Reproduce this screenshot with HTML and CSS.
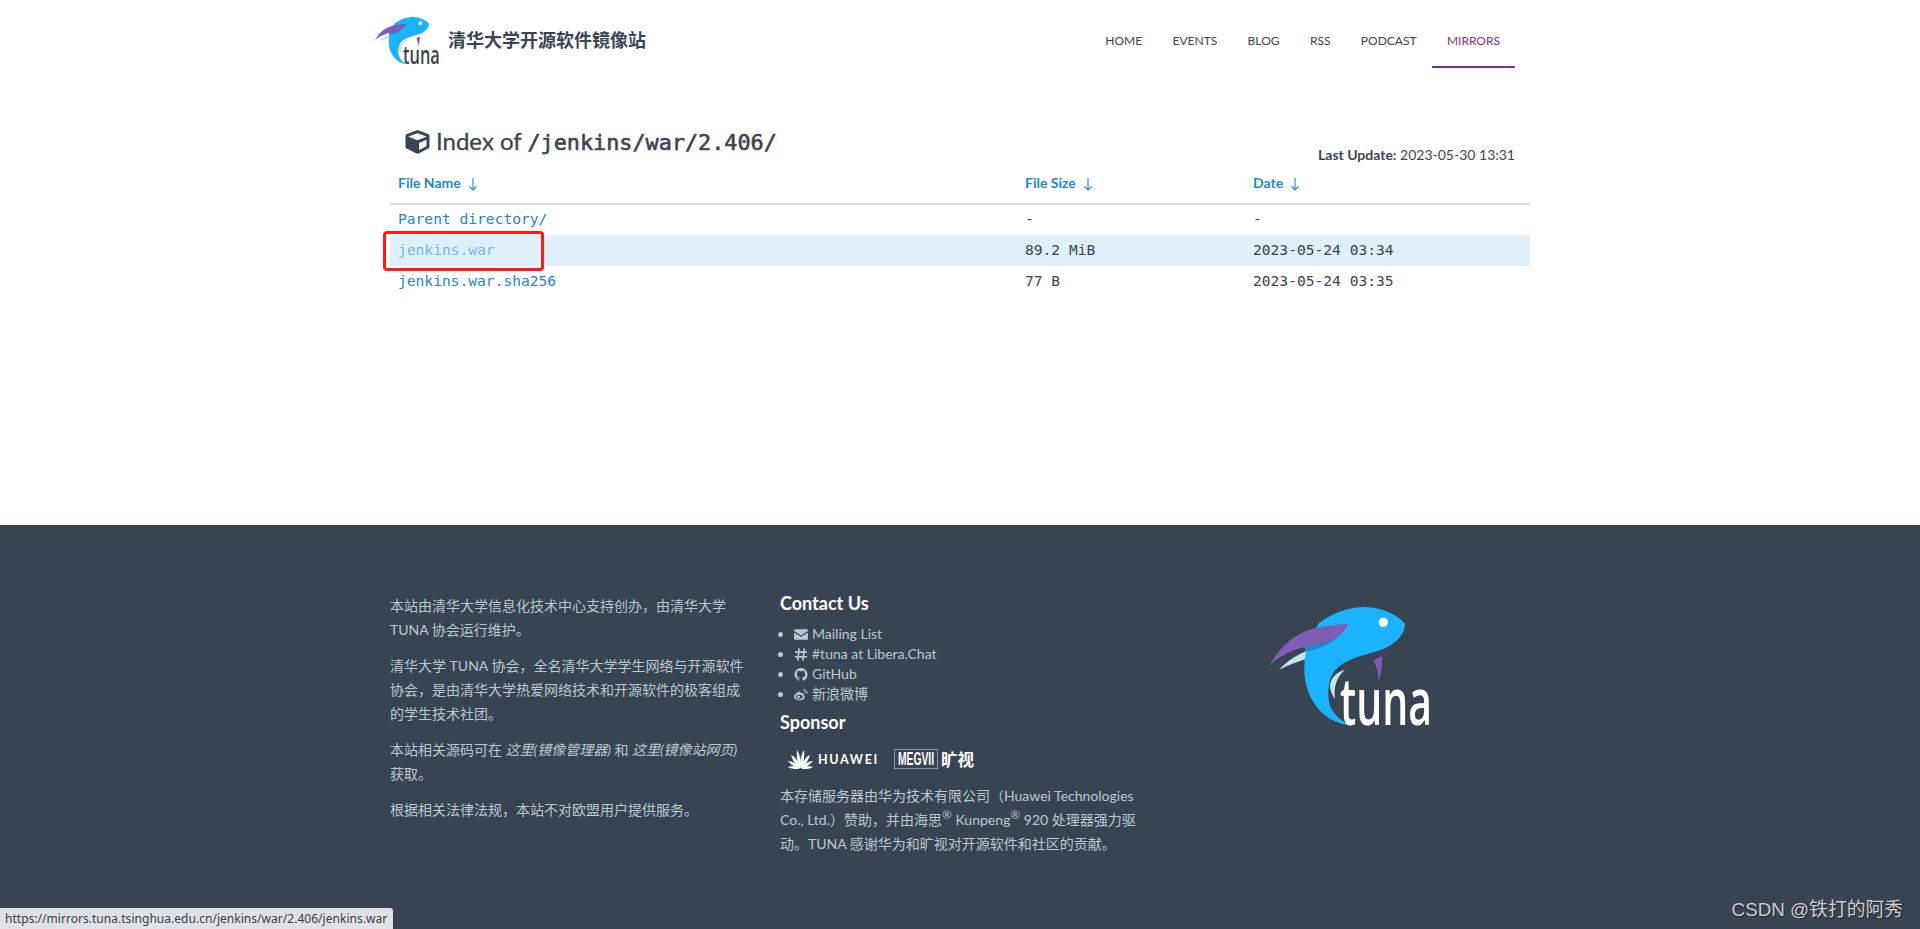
FILE: index.html
```html
<!DOCTYPE html>
<html lang="zh-CN">
<head>
<meta charset="utf-8">
<title>Index of /jenkins/war/2.406/</title>
<link rel="stylesheet" href="styles.css">
</head>
<body>
<svg class="defs" width="0" height="0" aria-hidden="true">
  <symbol id="tuna-logo" viewBox="60 50 480 360">
    <path fill="#1bb2ff" d="M205 100C250 65 300 50 345 50C400 52 445 75 465 100C465 130 440 160 395 178C340 195 285 205 255 240C235 265 230 310 240 345C250 375 280 398 305 405C260 402 215 378 190 335C165 295 160 250 164 205C165 190 165 180 166 170Z"/>
    <path fill="#2b83bf" d="M165 168C205 160 255 148 285 112C262 155 215 175 165 184Z"/>
    <path fill="#7f5db4" d="M60 225C85 175 130 130 190 115C225 106 260 102 295 100C285 130 250 152 210 160C165 168 110 178 60 225Z"/>
    <path fill="#c0e3ec" d="M88 238C110 212 140 195 168 183L165 207C140 215 115 225 88 238Z"/>
    <path fill="#7f5db4" d="M370 210L396 197C398 225 393 250 387 272C385 245 378 225 370 210Z"/>
    <path fill="#c0e3ec" d="M285 238C258 245 240 265 240 290C242 305 248 316 255 326C250 290 260 260 285 238Z"/>
    <circle cx="400" cy="96" r="14" fill="#fff"/>
    <text class="tuna-word" x="270" y="403" textLength="276" lengthAdjust="spacingAndGlyphs">tuna</text>
  </symbol>
</svg>

<header class="site-header">
  <div class="header-inner">
    <a class="brand" href="#">
      <svg class="brand-logo"><use href="#tuna-logo"/></svg>
      <span class="brand-name">清华大学开源软件镜像站</span>
    </a>
    <nav class="site-nav">
      <a href="#">HOME</a>
      <a href="#">EVENTS</a>
      <a href="#">BLOG</a>
      <a href="#">RSS</a>
      <a href="#">PODCAST</a>
      <a class="active" href="#">MIRRORS</a>
    </nav>
  </div>
</header>

<main class="content">
  <div class="title-row">
    <h1 class="page-title">
      <svg class="cube" viewBox="0 0 512 512"><path fill="currentColor" d="M239.1 6.3l-208 78c-18.7 7-31.1 25-31.1 45v225.1c0 18.2 10.3 34.8 26.5 42.9l208 104c13.5 6.8 29.4 6.8 42.9 0l208-104c16.3-8.1 26.5-24.8 26.5-42.9V129.3c0-20-12.4-37.9-31.1-44.9l-208-78C262 2.2 250 2.2 239.1 6.3zM256 68.4l192 72v1.1l-192 78-192-78v-1.1l192-72zm32 356V275.5l160-65v133.9l-160 80z"/></svg>
      <span>Index of <code>/jenkins/war/2.406/</code></span>
    </h1>
    <p class="last-update"><strong>Last Update:</strong> 2023-05-30 13:31</p>
  </div>
  <table class="files">
    <thead>
      <tr>
        <th class="col-name"><a href="#">File Name<svg class="arrow" viewBox="0 0 10 14"><path d="M5 1V13M1.5 9.5L5 13L8.500 9.500"/></svg></a></th>
        <th class="col-size"><a href="#">File Size<svg class="arrow" viewBox="0 0 10 14"><path d="M5 1V13M1.5 9.5L5 13L8.500 9.500"/></svg></a></th>
        <th class="col-date"><a href="#">Date<svg class="arrow" viewBox="0 0 10 14"><path d="M5 1V13M1.5 9.5L5 13L8.500 9.500"/></svg></a></th>
      </tr>
    </thead>
    <tbody>
      <tr class="first"><td><a href="#">Parent directory/</a></td><td>-</td><td>-</td></tr>
      <tr class="hovered"><td><a href="#">jenkins.war</a></td><td>89.2 MiB</td><td>2023-05-24 03:34</td></tr>
      <tr><td><a href="#">jenkins.war.sha256</a></td><td>77 B</td><td>2023-05-24 03:35</td></tr>
    </tbody>
  </table>
  <div class="annotation"></div>
</main>

<footer class="site-footer">
  <div class="footer-inner">
    <section class="footer-col about">
      <p>本站由清华大学信息化技术中心支持创办，由清华大学 TUNA 协会运行维护。</p>
      <p>清华大学 TUNA 协会，全名清华大学学生网络与开源软件协会，是由清华大学热爱网络技术和开源软件的极客组成的学生技术社团。</p>
      <p>本站相关源码可在 <a href="#"><em>这里(镜像管理器)</em></a> 和 <a href="#"><em>这里(镜像站网页)</em></a> 获取。</p>
      <p>根据相关法律法规，本站不对欧盟用户提供服务。</p>
    </section>
    <section class="footer-col contact">
      <h4>Contact Us</h4>
      <ul>
        <li><svg class="ico" viewBox="0 0 16 12"><path fill="currentColor" d="M1.500 0H14.500C15.300 0 16 .7 16 1.500V2L8 7L0 2V1.500C0 .7.7 0 1.500 0ZM0 3.600L8 8.600L16 3.600V10.500C16 11.300 15.300 12 14.500 12H1.500C.7 12 0 11.300 0 10.500Z"/></svg>Mailing List</li>
        <li><svg class="ico" viewBox="0 0 14 14"><path fill="none" stroke="currentColor" stroke-width="1.800" d="M5 0.500L3.500 13.500M10.500 0.500L9 13.500M.5 4.500H13.500M.5 9.500H13.500"/></svg>#tuna at Libera.Chat</li>
        <li><svg class="ico" viewBox="0 0 16 16"><path fill="currentColor" d="M8 0C3.580 0 0 3.580 0 8c0 3.540 2.290 6.530 5.470 7.590.4.07.55-.17.55-.38 0-.19-.01-.82-.01-1.490-2.010.37-2.530-.49-2.690-.94-.09-.23-.48-.94-.82-1.130-.28-.15-.68-.52-.01-.53.63-.01 1.080.58 1.230.82.72 1.210 1.870.87 2.330.66.07-.52.28-.87.51-1.070-1.780-.2-3.640-.89-3.640-3.950 0-.87.31-1.590.82-2.150-.08-.2-.36-1.020.08-2.120 0 0 .67-.21 2.200.82.64-.18 1.320-.27 2-.27.68 0 1.360.09 2 .27 1.530-1.040 2.200-.82 2.200-.82.44 1.100.16 1.920.08 2.120.51.56.82 1.270.82 2.150 0 3.070-1.870 3.750-3.650 3.950.29.25.54.73.54 1.480 0 1.070-.01 1.930-.01 2.200 0 .21.15.46.55.38A8.013 8.013 0 0016 8c0-4.420-3.580-8-8-8z"/></svg>GitHub</li>
        <li><svg class="ico" viewBox="0 0 16 13"><path fill="currentColor" fill-rule="evenodd" d="M6.800 3C3.500 3.800 0 6.500 0 9C0 11.500 3 13 6.500 13C10 13 12.500 11 12.500 9C12.500 8 11.500 7.400 10.800 7.200C11.200 6 11 5 10 4.700C9 4.400 7.800 5 7.400 5.300C7.700 4 7.600 3 6.800 3ZM6 6.800C8.300 6.800 10 7.800 10 9.200C10 10.600 8.200 11.800 6 11.800C3.800 11.800 2 10.700 2 9.300C2 7.900 3.800 6.800 6 6.800ZM5.200 8C4.100 8 3.300 8.700 3.300 9.500C3.300 10.300 4.100 10.800 5.100 10.800C6.100 10.800 7 10.100 7 9.300C7 8.500 6.200 8 5.200 8Z"/><path fill="none" stroke="currentColor" stroke-width="1.100" d="M10.500 1C13 .5 15.500 2.500 15 5.500M11 3C12.500 2.800 13.500 3.800 13.200 5.200"/></svg>新浪微博</li>
      </ul>
      <h4>Sponsor</h4>
      <div class="sponsors">
        <span class="huawei">
          <svg class="petals" viewBox="-14 -20 28 21">
            <g fill="#fff">
              <path d="M0 0C-2.600 -5 -3.300 -11 -1.300 -19C.9 -15 1.900 -7 0 0Z" transform="rotate(-7)"/>
              <path d="M0 0C2.600 -5 3.300 -11 1.300 -19C-.9 -15 -1.900 -7 0 0Z" transform="rotate(7)"/>
              <path d="M0 0C-2.600 -5 -3.300 -10 -1.300 -17C.9 -13 1.900 -7 0 0Z" transform="rotate(-31)"/>
              <path d="M0 0C2.600 -5 3.300 -10 1.300 -17C-.9 -13 -1.900 -7 0 0Z" transform="rotate(31)"/>
              <path d="M0 0C-2.400 -4 -3.100 -9 -1.300 -15C.9 -12 1.700 -6 0 0Z" transform="rotate(-56)"/>
              <path d="M0 0C2.400 -4 3.100 -9 1.300 -15C-.9 -12 -1.700 -6 0 0Z" transform="rotate(56)"/>
              <path d="M0 0C-2.200 -3 -2.800 -8 -1.200 -13.500C.8 -10 1.500 -5 0 0Z" transform="rotate(-80)"/>
              <path d="M0 0C2.200 -3 2.800 -8 1.200 -13.500C-.8 -10 -1.500 -5 0 0Z" transform="rotate(80)"/>
            </g>
          </svg>
          <span class="huawei-word">HUAWEI</span>
        </span>
        <span class="megvii"><span class="megvii-box"><svg class="megvii-word" viewBox="0 0 40 14"><text x="1" y="13.500" textLength="38" lengthAdjust="spacingAndGlyphs">MEGVII</text></svg></span><b>旷视</b></span>
      </div>
      <p class="sponsor-note">本存储服务器由华为技术有限公司（Huawei Technologies Co., Ltd.）赞助，并由海思<sup>®</sup> Kunpeng<sup>®</sup> 920 处理器强力驱动。TUNA 感谢华为和旷视对开源软件和社区的贡献。</p>
    </section>
    <section class="footer-col logo-col">
      <svg class="footer-logo"><use href="#tuna-logo"/></svg>
    </section>
  </div>
</footer>

<div class="status-bubble">https://mirrors.tuna.tsinghua.edu.cn/jenkins/war/2.406/jenkins.war</div>
<div class="watermark">CSDN @铁打的阿秀</div>
</body>
</html>
```
FILE: styles.css
```css
* { box-sizing: border-box; }
html, body { margin: 0; padding: 0; }
body {
  min-height: 100vh;
  display: flex;
  flex-direction: column;
  font-family: Lato, "Noto Sans CJK SC", sans-serif;
  font-size: 14px;
  color: #3a4553;
  background: #fff;
  overflow: hidden;
}
a { color: inherit; text-decoration: none; }
.defs { position: absolute; }
.tuna-word {
  font-family: "Open Sans", sans-serif;
  font-weight: 600;
  font-size: 195px;
  fill: currentColor;
}

.site-header { height: 68px; }
.header-inner {
  width: 1170px;
  margin: 0 auto;
  height: 100%;
  display: flex;
  justify-content: space-between;
  align-items: stretch;
  padding-right: 30px;
}
.brand { display: flex; align-items: flex-start; gap: 9px; color: #3a4553; }
.brand-logo { width: 64px; height: 48px; margin-top: 17px; }
.brand-name { font-size: 18px; font-weight: 700; margin-top: 27px; line-height: 26px; }
.site-nav { display: flex; font-size: 12px; }
.site-nav a {
  padding: 0 15px;
  margin-left: 0.4px;
  line-height: 81px;
  height: 68px;
  border-bottom: 2px solid transparent;
  color: #3a4553;
}
.site-nav a.active { color: #80308e; border-bottom-color: #80308e; }

.content {
  position: relative;
  flex: 1;
  width: 1140px;
  margin: 0 auto;
}
.title-row {
  display: flex;
  justify-content: space-between;
  align-items: flex-end;
  height: 97px;
  padding-right: 15px;
}
.page-title {
  margin: 0 0 7px 15px;
  display: flex;
  align-items: center;
  gap: 6px;
  font-size: 24px;
  font-weight: 400;
  line-height: 30px;
  color: #3a4553;
  -webkit-text-stroke: 0.3px #3a4553;
}
.page-title code {
  font-family: "DejaVu Sans Mono", monospace;
  font-size: 21.8px;
  font-weight: 400;
  -webkit-text-stroke: 0.6px #3a4553;
}
.cube { width: 25px; height: 24px; }
.last-update { margin: 0 0 2px; font-size: 14px; }
.files { width: 100%; border-collapse: collapse; table-layout: fixed; }
.col-name { width: 627px; }
.col-size { width: 228px; }
.files th {
  text-align: left;
  padding: 0 8px 4px;
  height: 39px;
  border-bottom: 2px solid #dddddd;
  font-size: 14px;
  font-weight: 700;
  color: #2288d0;
}
.arrow {
  width: 10px;
  height: 14px;
  margin-left: 7px;
  vertical-align: -3px;
  fill: none;
  stroke: #2288d0;
  stroke-width: 1.100;
}
.files td {
  padding: 0 8px 2px;
  height: 30px;
  font-family: "DejaVu Sans Mono", monospace;
  font-size: 14.6px;
  color: #3a4553;
}
.files td a { color: #1f84cc; }
.files .first td { height: 31px; padding-bottom: 4px; }
.files .hovered td { background: #dff0fa; height: 31px; }
.files .hovered td a { color: #6fbce8; }
.annotation {
  position: absolute;
  left: -7px;
  top: 163px;
  width: 161px;
  height: 40px;
  border: 3px solid #ff1a12;
  border-radius: 4px;
}

.site-footer { background: #394452; color: #b8c8d0; height: 404px; flex: none; }
.footer-inner {
  width: 1140px;
  margin: 0 auto;
  display: flex;
  padding-top: 69px;
}
.footer-col { width: 390px; }
.footer-col p { margin: 0 0 12px; line-height: 24px; }
.about { padding-right: 0; width: 390px; }
.about p { width: 360px; }
.contact { width: 375px; }
.contact h4 { margin: 0; font-size: 18px; font-weight: 700; line-height: 18px; color: #fff; }
.contact ul { margin: 12px 0 9px; padding: 0 0 0 14px; list-style: disc; }
.contact li { line-height: 20px; }
.ico { width: 14px; height: 13px; margin-right: 4px; vertical-align: -2px; }
.sponsors { display: flex; align-items: center; gap: 15px; margin: 16px 0 13px 7px; height: 24px; color: #fff; }
.huawei { display: flex; align-items: center; gap: 4px; }
.petals { width: 27px; height: 20px; }
.huawei-word { font-family: Lato, sans-serif; font-weight: 700; font-size: 12.500px; letter-spacing: 1.700px; }
.megvii { display: flex; align-items: center; gap: 3px; }
.megvii-box { display: block; width: 44px; height: 20px; border: 1px solid #8a95a0; padding: 1px 2px; }
.megvii-word { display: block; width: 100%; height: 100%; }
.megvii-word text { font-family: "Liberation Sans", sans-serif; font-weight: 700; font-size: 19px; fill: #fff; }
.megvii b { font-size: 16.500px; font-family: "Noto Sans CJK SC", sans-serif; }
.sponsor-note { width: 360px; }
.sponsor-note sup { font-size: 85%; line-height: 0; }
.logo-col { width: 375px; padding: 13px 0 0 115px; }
.footer-logo { display: block; width: 160px; height: 120px; color: #fff; }

.status-bubble {
  position: absolute;
  left: 0;
  bottom: 0;
  width: 393px;
  height: 21px;
  padding: 0 5px;
  line-height: 21px;
  background: #dee1e6;
  border-top-right-radius: 3px;
  font-family: "Noto Sans", sans-serif;
  font-size: 12px;
  letter-spacing: 0.03px;
  color: #3c4043;
  white-space: nowrap;
}
.watermark {
  position: absolute;
  right: 17px;
  bottom: 6px;
  font-family: "Liberation Sans", "Noto Sans CJK SC", sans-serif;
  font-size: 18.800px;
  line-height: 26px;
  color: #c9ccd0;
  text-shadow: 1px 1px 1px #22282f;
}
```
